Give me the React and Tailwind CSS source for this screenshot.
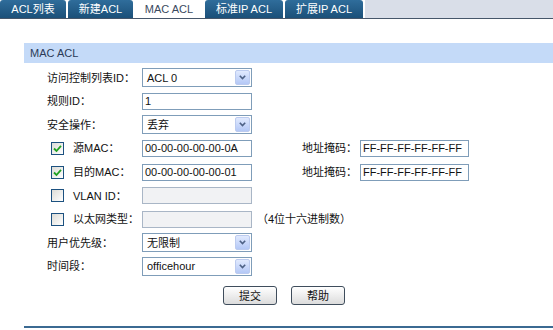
import { useState } from 'react'

const TABS = [
  { label: 'ACL列表', w: 'w-[66px]' },
  { label: '新建ACL', w: 'w-[65px]' },
  { label: 'MAC ACL', w: 'w-[68px]', active: true },
  { label: '标准IP ACL', w: 'w-[78px]' },
  { label: '扩展IP ACL', w: 'w-[78px]' },
]

function Check({ on }) {
  return (
    <span className="w-[13px] h-[13px] border border-[#1c5180] bg-gradient-to-br from-[#dcdcd7] to-white flex items-center justify-center shrink-0">
      {on && (
        <svg width="9" height="9" viewBox="0 0 9 9">
          <path d="M1 4.5 L3.5 7 L8 1.8" fill="none" stroke="#21a121" strokeWidth="1.8" />
        </svg>
      )}
    </span>
  )
}

function Select({ value }) {
  return (
    <div className="w-[110px] h-[19px] border border-[#7f9db9] bg-white flex items-center justify-between pl-[4px] pr-[1px]">
      <span>{value}</span>
      <span className="w-[15px] h-[15px] rounded-[2px] bg-gradient-to-b from-[#e1eafe] to-[#b4c8f6] border border-[#bccbef] flex items-center justify-center">
        <svg width="7" height="5" viewBox="0 0 7 5">
          <path d="M0.8 0.8 L3.5 3.6 L6.2 0.8" fill="none" stroke="#4d6185" strokeWidth="1.6" />
        </svg>
      </span>
    </div>
  )
}

function Input({ value = '', disabled, w = 'w-[110px]' }) {
  return (
    <div className={`${w} h-[17px] border flex items-center pl-[2px] ${disabled ? 'bg-[#f1f2f4] border-[#a9b6c6]' : 'bg-white border-[#7f9db9]'}`}>
      {value}
    </div>
  )
}

function Row({ label, check, children }) {
  return (
    <div className="h-[23.6px] flex items-center">
      {check !== undefined ? (
        <div className="w-[95px] pl-[4px] flex items-center">
          <Check on={check} />
          <span className="ml-[9px] whitespace-nowrap">{label}</span>
        </div>
      ) : (
        <div className="w-[95px] whitespace-nowrap">{label}</div>
      )}
      {children}
    </div>
  )
}

export default function App() {
  const [tab] = useState('MAC ACL')

  return (
    <div className="w-[553px] h-[330px] bg-white text-[11px] text-[#111] overflow-hidden" style={{ fontFamily: '"Liberation Sans", "Noto Sans CJK SC", sans-serif' }}>
      {/* tabs */}
      <div className="h-[19px] flex bg-[#d9dee8] border-b border-[#46566a]">
        <div className="flex gap-[2px] bg-white pr-[2px]">
          {TABS.map(t => (
            <div key={t.label}
              className={`${t.w} h-[18px] rounded-t-[3px] flex items-center justify-center ${t.label === tab ? 'bg-white text-[#3a4a60]' : 'bg-gradient-to-b from-[#2f6d9b] to-[#1b5079] text-white'}`}>
              {t.label}
            </div>
          ))}
        </div>
      </div>

      <div className="ml-[24px] mt-[24px] h-[20px] bg-[#c4daf8] flex items-center pl-[6px] text-[#2b3a57]">MAC ACL</div>

      <div className="pl-[47px] mt-[3px]">
        <Row label="访问控制列表ID："><Select value="ACL 0" /></Row>
        <Row label="规则ID："><Input value="1" /></Row>
        <Row label="安全操作："><Select value="丢弃" /></Row>
        <Row label="源MAC：" check={true}>
          <Input value="00-00-00-00-00-0A" />
          <span className="ml-[50px] w-[58px] whitespace-nowrap">地址掩码：</span>
          <Input value="FF-FF-FF-FF-FF-FF" w="w-[109px]" />
        </Row>
        <Row label="目的MAC：" check={true}>
          <Input value="00-00-00-00-00-01" />
          <span className="ml-[50px] w-[58px] whitespace-nowrap">地址掩码：</span>
          <Input value="FF-FF-FF-FF-FF-FF" w="w-[109px]" />
        </Row>
        <Row label="VLAN ID：" check={false}><Input disabled /></Row>
        <Row label="以太网类型：" check={false}>
          <Input disabled />
          <span className="ml-[5px] whitespace-nowrap">（4位十六进制数）</span>
        </Row>
        <Row label="用户优先级："><Select value="无限制" /></Row>
        <Row label="时间段："><Select value="officehour" /></Row>
      </div>

      <div className="mt-[8px] flex gap-[14px] pl-[223px]">
        {['提交', '帮助'].map(b => (
          <button key={b} className="w-[54px] h-[19px] rounded-[3px] border border-[#3f4d5c] bg-gradient-to-b from-white to-[#dcdcdc] flex items-center justify-center">
            {b}
          </button>
        ))}
      </div>

      <div className="ml-[24px] mt-[21px] h-[2px] bg-[#3b6a92]" />
    </div>
  )
}
